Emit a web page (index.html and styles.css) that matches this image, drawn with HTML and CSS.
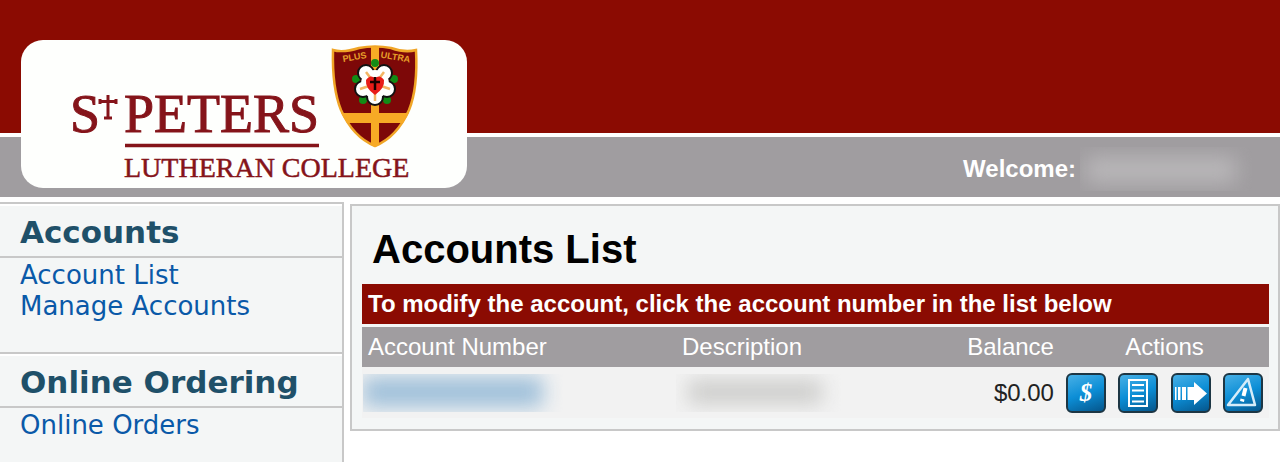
FILE: index.html
```html
<!DOCTYPE html>
<html lang="en">
<head>
    <meta charset="UTF-8">
    <title>Accounts List</title>
    <link rel="stylesheet" href="styles.css">
</head>
<body>
    <header class="header">
        <div class="banner"></div>
        <div class="welcome">
            <span>Welcome:</span>
            <span class="masked masked-user"><span class="smudge"></span></span>
        </div>
        <!-- College logo, sits over both bars -->
        <svg class="logo" viewBox="0 0 446 148" role="img" aria-label="St Peters Lutheran College">
            <rect width="446" height="148" rx="22" fill="#fefffd"/>
            <g class="logo-text">
                <text class="logo-big" x="49" y="92">S</text>
                <text class="logo-big" x="103" y="92">PETERS</text>
                <text class="logo-small" x="103" y="137">LUTHERAN COLLEGE</text>
            </g>
            <path d="M87 55V78M79 61.500H95M83 78h8M79 59v5M95 59v5" fill="none" stroke="#85141a" stroke-width="3"/>
            <path d="M104 105.500H298" stroke="#85141a" stroke-width="3.500"/>
            <!-- shield -->
            <path d="M312 10Q322 13 338 8Q354 5 370 8Q384 13 395 10Q397 48 388 70Q376 97 354 106Q332 97 320 70Q311 48 312 10Z" fill="#7d0808" stroke="#f0a526" stroke-width="2.500"/>
            <path d="M350 7h8v98l-4 2-4-2ZM320 73H388L382 83H326Z" fill="#f7aa25"/>
            <text class="motto" x="334" y="20" transform="rotate(-10 334 20)">PLUS</text>
            <text class="motto" x="374" y="20" transform="rotate(10 374 20)">ULTRA</text>
            <g fill="#128c16">
                <circle cx="354" cy="23" r="4"/><circle cx="335" cy="39" r="4"/><circle cx="373" cy="39" r="4"/>
                <circle cx="342" cy="60" r="4"/><circle cx="366" cy="60" r="4"/>
            </g>
            <g fill="#fff" stroke="#111" stroke-width="2">
                <circle cx="345" cy="33" r="8"/><circle cx="363" cy="33" r="8"/><circle cx="342" cy="49" r="8"/>
                <circle cx="366" cy="49" r="8"/><circle cx="354" cy="57" r="8"/>
            </g>
            <circle cx="354" cy="44" r="14" fill="#fff"/>
            <path d="M354 44L345 32M354 44L363 32M354 44L339 49M354 44L369 49M354 44V61" stroke="#f3b565" stroke-width="2.500"/>
            <path d="M354 55Q344 48 345 40Q349 34 354 38Q359 34 363 40Q364 48 354 55Z" fill="#e81c18"/>
            <path d="M354 37V50M349 42H359" stroke="#180000" stroke-width="2.500"/>
        </svg>
    </header>

    <div class="page">
        <nav class="sidebar">
            <section class="menu">
                <h2>Accounts</h2>
                <ul>
                    <li><a href="#">Account List</a></li>
                    <li><a href="#">Manage Accounts</a></li>
                </ul>
            </section>
            <section class="menu">
                <h2>Online Ordering</h2>
                <ul>
                    <li><a href="#">Online Orders</a></li>
                </ul>
            </section>
        </nav>

        <main class="content">
            <h1>Accounts List</h1>
            <table class="accounts">
                <colgroup>
                    <col class="col-number">
                    <col>
                    <col>
                    <col class="col-actions">
                </colgroup>
                <thead>
                    <tr class="hint">
                        <th colspan="4">To modify the account, click the account number in the list below</th>
                    </tr>
                    <tr class="heads">
                        <th>Account Number</th>
                        <th>Description</th>
                        <th class="right">Balance</th>
                        <th class="center">Actions</th>
                    </tr>
                </thead>
                <tbody>
                    <tr>
                        <td class="flush"><a href="#" class="masked masked-number" aria-label="Account"><span class="smudge"></span></a></td>
                        <td class="flush"><span class="masked masked-desc"><span class="smudge"></span></span></td>
                        <td class="right">$0.00</td>
                        <td>
                            <div class="actions">
                                <button type="button" aria-label="Pay">
                                    <svg viewBox="0 0 36 36"><text class="dollar" x="18" y="26">$</text></svg>
                                </button>
                                <button type="button" aria-label="Statement">
                                    <svg viewBox="0 0 36 36" fill="none" stroke="#fff" stroke-width="2">
                                        <path d="M9 5H27V31H9Z"/>
                                        <path d="M12 10H24M12 15.500H24M12 21H24M12 26.500H24" stroke-width="2"/>
                                    </svg>
                                </button>
                                <button type="button" aria-label="Transfer">
                                    <svg viewBox="0 0 36 36" fill="#fff">
                                        <path d="M2 12h1.500v13H2ZM5 12h2.500v13H5ZM9 12h4v13H9ZM14.500 12H21V7L34 18.500L21 30V25H14.500Z"/>
                                    </svg>
                                </button>
                                <button type="button" aria-label="Alert">
                                    <svg viewBox="0 0 36 36" fill="none" stroke="#d5ecf9" stroke-width="2.500" stroke-linejoin="round">
                                        <path d="M23 4L3 30H30Z"/>
                                        <path d="M20.500 13L18.500 21M17.500 24L17 26.500" stroke="#fff" stroke-width="4"/>
                                    </svg>
                                </button>
                            </div>
                        </td>
                    </tr>
                </tbody>
            </table>
        </main>
    </div>
</body>
</html>
```
FILE: styles.css
```css
body {
    margin: 0;
    background-color: #fff;
    font-family: "Liberation Sans", Arial, sans-serif;
    font-size: 24px;
    color: #222;
}

/* Header */
.header {
    position: relative;
}

.banner {
    height: 133px;
    background-color: #8b0b02;
    border-bottom: 4px solid #fff;
}

.welcome {
    display: flex;
    align-items: center;
    justify-content: flex-end;
    gap: 4px;
    height: 57px;
    padding-right: 28px;
    padding-top: 3px;
    background-color: #a09da0;
    color: #fff;
    font-weight: bold;
}

.logo {
    position: absolute;
    left: 21px;
    top: 40px;
    width: 446px;
    height: 148px;
}

.logo-text {
    fill: #85141a;
    font-family: "Liberation Serif", "Times New Roman", serif;
}

.logo-big {
    font-size: 54px;
    stroke: #85141a;
}

.logo-small {
    font-size: 28px;
    stroke: #85141a;
    stroke-width: 0.5px;
}

.motto {
    fill: #e8a02a;
    font-size: 9px;
    font-weight: bold;
    text-anchor: middle;
}

/* Hidden personal details */
.masked {
    display: block;
    overflow: hidden;
}

.smudge {
    display: block;
    filter: blur(10px);
}

.masked-user {
    width: 172px;
    height: 44px;
}

.masked-user .smudge {
    height: 26px;
    margin: 10px 16px 0 6px;
    background-color: #b9b7b9;
}

.masked-number {
    width: 200px;
    height: 38px;
    margin-left: 1px;
}

.masked-number .smudge {
    height: 30px;
    margin: 3px 20px 0 0;
    background-color: #9fc0da;
}

.masked-desc {
    width: 170px;
    height: 38px;
}

.masked-desc .smudge {
    height: 24px;
    margin: 6px 24px 0 12px;
    background-color: #cdcdcb;
}

/* Page */
.page {
    display: flex;
    align-items: flex-start;
    gap: 6px;
    padding-top: 5px;
}

.sidebar {
    box-sizing: border-box;
    width: 344px;
    flex-shrink: 0;
    min-height: calc(100vh - 202px);
    background-color: #f4f6f6;
    border-right: 2px solid #c8c8c8;
    font-family: Verdana, "DejaVu Sans", sans-serif;
}

.menu {
    border-top: 2px solid #c8c8c8;
    padding-bottom: 30px;
}

.menu h2 {
    margin: 0;
    padding: 2px 20px 0;
    border-top: 2px solid #fff;
    border-bottom: 2px solid #c8c8c8;
    font-size: 31px;
    line-height: 48px;
    color: #1f5069;
}

.menu ul {
    margin: 0;
    padding: 2px 20px 0;
    list-style: none;
    font-size: 26px;
    line-height: 31px;
}

.menu a {
    color: #0a59a8;
    text-decoration: none;
}

.content {
    flex: 1;
    margin-top: 2px;
    padding: 0 9px 11px 10px;
    background-color: #f4f6f6;
    border: 2px solid #c8c8c8;
}

.content h1 {
    margin: 0;
    padding: 20px 10px 12px;
    font-size: 40px;
    line-height: 46px;
    color: #000;
}

.accounts {
    width: 100%;
    table-layout: fixed;
    border-collapse: collapse;
}

.col-number {
    width: 314px;
}

.col-actions {
    width: 209px;
}

.accounts th,
.accounts td {
    padding: 0 6px;
    text-align: left;
}

.accounts th {
    height: 40px;
    color: #fff;
}

.hint {
    background-color: #8b0b02;
    border-bottom: 3px solid #f4f6f6;
}

.heads {
    background-color: #a09da0;
}

.heads th {
    font-weight: normal;
}

.accounts td {
    height: 51px;
    background-color: #f2f2f2;
}

.accounts .flush {
    padding: 0;
}

.accounts .right {
    text-align: right;
}

.accounts .center {
    text-align: center;
}

.actions {
    display: flex;
    justify-content: space-between;
}

.actions button {
    width: 40px;
    height: 40px;
    padding: 0;
    border: 2px solid #1d3644;
    border-radius: 6px;
    background: linear-gradient(160deg, #48b0e6, #0c8ed6 50%, #05568c);
}

.actions svg {
    display: block;
    width: 36px;
    height: 36px;
}

.dollar {
    fill: #fff;
    font-size: 25px;
    font-weight: bold;
    font-style: italic;
    font-family: "Liberation Serif", serif;
    text-anchor: middle;
}
```
